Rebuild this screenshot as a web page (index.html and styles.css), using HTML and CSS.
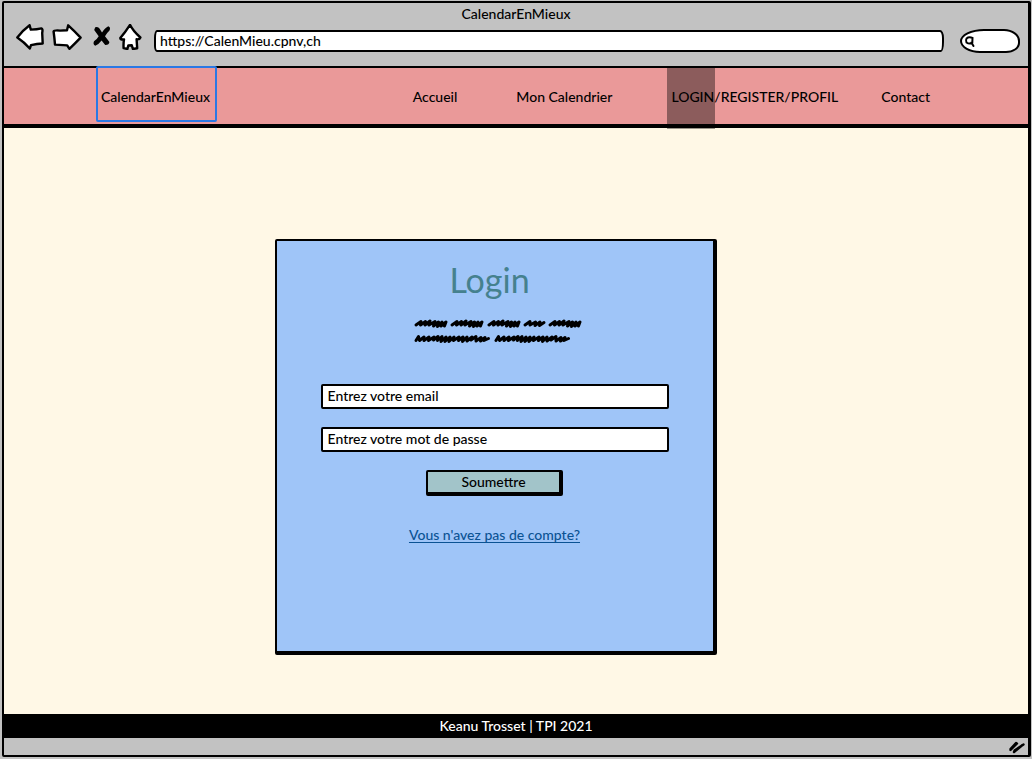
FILE: index.html
```html
<!DOCTYPE html>
<html lang="fr">
<head>
<meta charset="utf-8">
<meta name="viewport" content="width=device-width, initial-scale=1">
<title>CalendarEnMieux</title>
<link rel="stylesheet" href="styles.css">
</head>
<body>
<div class="window">
  <div class="chrome">
    <div class="window-title">CalendarEnMieux</div>
    <div class="toolbar">
      <div class="tools">
        <button class="tool" type="button" aria-label="Précédent">
          <svg width="28" height="26" viewBox="16 24 28 26"><path class="outline" d="M17.3 37.5Q23 30 29.6 25.2L30.8 29.6Q37 29.6 41.5 28.4Q43 28.6 42.2 33L42.7 43.5Q37 43.6 31 45.2L29.8 48.5Q24 42 17.3 37.5Z"/></svg>
        </button>
        <button class="tool" type="button" aria-label="Suivant">
          <svg width="30" height="26" viewBox="52 24 30 26"><path class="outline" d="M53.6 31.5Q54 30 60 30.6L67 30.2L68.2 25.3Q74 30.5 80.6 37.6Q75 43.5 69.4 48.8L67.2 45.4L55 44.6Q54.5 38 53.6 31.5Z"/></svg>
        </button>
        <button class="tool" type="button" aria-label="Arrêter">
          <svg width="21" height="26" viewBox="90 24 21 26"><path d="M95.2 27.2Q98.3 26.2 99.5 28.600L102 32.600Q105.200 27.600 108.300 26.300Q111 27.300 109.500 30.500Q106.800 33 105 36.300L109.400 42Q109.200 45 105.200 44.900L101.600 40.600Q98.500 44.800 95.300 45.700Q92.600 44.500 94 41.300Q97.300 39 98.700 36.300L94.200 30Z"/></svg>
        </button>
        <button class="tool" type="button" aria-label="Accueil du navigateur">
          <svg width="23" height="26" viewBox="119 24 23 26"><path class="outline" d="M130 24.800Q133 31 140.400 37.500Q139.500 39.800 136.600 39.300L137.200 48.300L132.900 49L131.800 45.300L128.300 45.500L127.400 49L123.600 48.200Q123.300 43 124 39.500Q120.500 39.800 120.300 38Q125 32.500 130 24.800Z"/></svg>
        </button>
      </div>
      <input class="address" type="text" aria-label="Adresse" value="https://CalenMieu.cpnv,ch">
      <label class="search">
        <svg width="12" height="14" viewBox="0 0 12 14"><path class="lens" d="M2.500 4.500Q5 2.500 8.500 4L8.300 9Q5 10.300 2.500 8.500Q1.500 6.500 2.500 4.500M7.300 8.500L9.500 12"/></svg>
        <input class="search-input" type="search" aria-label="Rechercher">
      </label>
    </div>
  </div>

  <header class="site-header">
    <a class="brand" href="#">CalendarEnMieux</a>
    <nav class="nav">
      <a href="#">Accueil</a>
      <a href="#">Mon Calendrier</a>
      <a class="current" href="#">LOGIN/REGISTER/PROFIL</a>
      <a href="#">Contact</a>
    </nav>
  </header>

  <main class="page">
    <form class="card">
      <h1 class="heading">Login</h1>
      <svg class="scribble" width="174" height="28" viewBox="408 317 174 28" aria-hidden="true">
        <defs>
          <path id="word" d="M1 8L6 4.500L5.500 8L10.500 4.500L10 8L15 4L14 8L20 4.500L18.500 9L23.500 5L22.500 9.500L27 5L26 9L31 5L29.500 9"/>
          <path id="short" d="M1 8L6 4.500L6 8L11.500 5L11 8.500L16 5L15.500 8.500L20 5.500"/>
          <path id="long" d="M2 8.500L4.500 4.500L5.500 8.500L10 5L10 8.500L15 5L14.500 8.500L20 5L19.500 8L24 4.500L23.500 8.500L28 4.500L27 9.500L32 5L31 9.500L36 5L35 9.500L40 5L39.500 8.500L45 5L44.500 8.500L49 5L48.500 9.500L53 5L53 9L58 5L57 8L62 4.500L62 9L67 5.500L66.500 9L71 5.500L70 8.500L74.500 6.500"/>
        </defs>
        <use href="#word" x="415" y="317"/><use href="#word" x="451" y="317"/><use href="#word" x="488" y="317"/><use href="#short" x="524" y="317"/><use href="#word" x="549" y="317"/>
        <use href="#long" x="414" y="332"/><use href="#long" x="494" y="332"/>
      </svg>
      <input class="field" type="email" aria-label="Entrez votre email" placeholder="Entrez votre email">
      <input class="field" type="password" aria-label="Entrez votre mot de passe" placeholder="Entrez votre mot de passe">
      <button class="submit" type="submit">Soumettre</button>
      <a class="signup" href="#">Vous n'avez pas de compte?</a>
    </form>
  </main>

  <footer class="site-footer">Keanu Trosset | TPI 2021</footer>
  <div class="status">
    <svg width="18" height="14" viewBox="0 0 18 14" aria-hidden="true"><path class="grip" d="M2.500 9L8 3M2.500 10L9 3.500M6 12L14.500 5M6.500 10.500L15.500 4.500"/></svg>
  </div>
</div>
</body>
</html>
```
FILE: styles.css
```css
* { box-sizing: border-box; }

body {
  margin: 0;
  background: #c2c2c2;
  color: #000;
  font: 500 14px/20px Lato, "Liberation Sans", sans-serif;
}

input, button { font: inherit; color: inherit; }
a { color: inherit; text-decoration: none; }
svg { display: block; }

.window {
  display: flex;
  flex-direction: column;
  min-height: calc(100vh - 3px);
  margin: 1px 1px 2px 2px;
  border: 2px solid #000;
  border-right-width: 3px;
  border-radius: 2px;
  background: #c2c2c2;
}

.chrome { border-bottom: 2px solid #000; }
.window-title { text-align: center; line-height: 21px; }

.toolbar {
  display: flex;
  align-items: center;
  gap: 16px;
  padding: 0 8px 8px 12px;
}
.tools {
  display: flex;
  gap: 8px;
  padding-bottom: 8px;
}
.tool {
  padding: 0;
  border: 0;
  background: none;
}
.outline {
  fill: #fff;
  stroke: #000;
  stroke-width: 2.4;
  stroke-linejoin: round;
}

.address {
  flex: 1;
  min-width: 0;
  height: 22px;
  margin-left: -4px;
  padding: 0 4px 2px;
  border: 2px solid #000;
  border-radius: 3px 4px 3px 3px / 8px 8px 10px 6px;
  background: #fff;
}
.search {
  display: flex;
  align-items: center;
  width: 60px;
  height: 24px;
  padding-left: 2px;
  border: 2px solid #000;
  border-radius: 24px 16px 14px 20px / 12px 12px 10px 12px;
  background: #fff;
}
.lens {
  fill: none;
  stroke: #000;
  stroke-width: 2;
  stroke-linecap: round;
}
.search-input {
  width: 32px;
  padding: 0;
  border: 0;
  background: none;
}

.site-header {
  display: flex;
  align-items: center;
  justify-content: space-between;
  height: 60px;
  padding: 0 98px 0 92px;
  border-bottom: 4px solid #000;
  background: #ea9999;
}
.brand {
  margin: -5px 0 -1px;
  padding: 19px 5px 13px 3px;
  border: 2px solid #2a78e4;
  border-radius: 2px;
}
.nav {
  display: flex;
  gap: 59px;
  padding-top: 2px;
}
.nav a:last-child { margin-left: -16px; }
.current { position: relative; }
.current::before {
  content: "";
  position: absolute;
  inset: -21px auto -22px -4px;
  width: 48px;
  background: rgb(0 0 0 / 40%);
}

.page {
  display: flex;
  flex: 1;
  justify-content: center;
  align-items: flex-start;
  padding: 111px 41px 58px 0;
  background: #fff8e6;
}
.card {
  display: flex;
  flex-direction: column;
  align-items: center;
  width: 100%;
  max-width: 442px;
  min-height: 416px;
  padding: 20px 44px;
  border: 2px solid #000;
  border-width: 2px 4px 4px 2px;
  border-radius: 2px;
  background: #9fc5f8;
}
.heading {
  margin: 0 0 18px;
  padding-right: 10px;
  color: #45818e;
  font-size: 34px;
  font-weight: 400;
  line-height: 38px;
}
.scribble {
  margin-bottom: 39px;
  fill: none;
  stroke: #000;
  stroke-width: 3;
  stroke-linecap: round;
  stroke-linejoin: round;
}
.field {
  width: 100%;
  height: 25px;
  margin-bottom: 18px;
  padding: 0 5px 2px;
  border: 2px solid #000;
  border-radius: 2px;
  background: #fff;
}
.field::placeholder { color: #000; opacity: 1; }
.submit {
  width: 137px;
  height: 26px;
  margin-bottom: 29px;
  padding: 0;
  border: 2px solid #000;
  border-width: 2px 4px 4px 2px;
  border-radius: 2px;
  background: #a2c4c9;
}
.signup {
  color: #0b5394;
  text-decoration: underline;
  text-underline-offset: 2px;
}

.site-footer {
  background: #000;
  color: #fff;
  line-height: 24px;
  text-align: center;
}
.status {
  display: flex;
  justify-content: flex-end;
  align-items: center;
  height: 17px;
  padding-right: 2px;
}
.grip {
  fill: none;
  stroke: #000;
  stroke-width: 2.4;
  stroke-linecap: round;
}
```
